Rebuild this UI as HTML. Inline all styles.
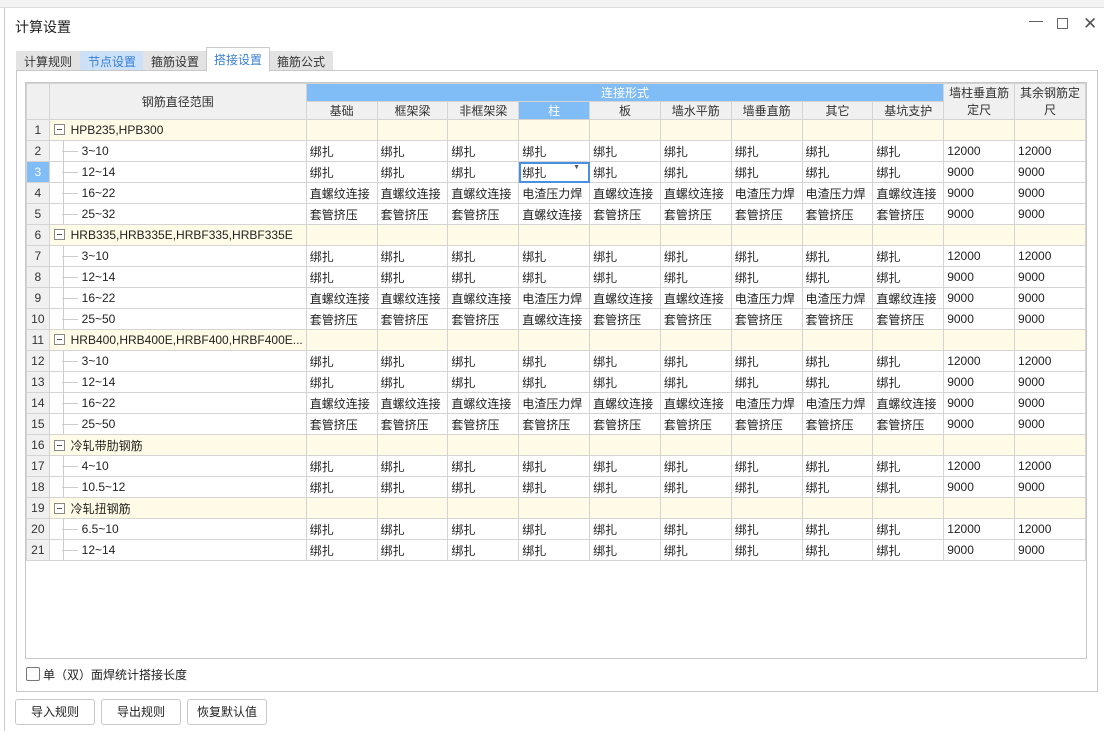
<!DOCTYPE html>
<html><head><meta charset="utf-8"><style>
*{box-sizing:border-box;margin:0;padding:0}
body{width:1104px;height:731px;background:#fff;position:relative;overflow:hidden;font-family:"Liberation Sans","Noto Sans CJK SC",sans-serif;font-size:12px;color:#222}
.topbar{position:absolute;left:0;top:0;width:1104px;height:8px;background:#f3f3f3;border-bottom:1px solid #ddd}
.dlg{position:absolute;left:4px;top:8px;width:1100px;height:723px;background:#fff;border-left:1px solid #ccc}
.title{position:absolute;left:15px;top:17px;font-size:14px;color:#222}
.ctl{position:absolute;top:14px;color:#555;font-size:14px}
.tab{position:absolute;top:51px;height:20px;padding:0 7px;background:#e3e3e3;color:#333;font-size:12px;line-height:20px;border:1px solid #e3e3e3}
.panel{position:absolute;left:16px;top:70px;width:1082px;height:622px;border:1px solid #c8c8c8;background:#fff}
.tbox{position:absolute;left:25px;top:82px;width:1062px;height:577px;border:1px solid #c8c8c8;background:#fff;overflow:hidden}
table{border-collapse:collapse;table-layout:fixed;position:absolute;left:0;top:0}
td{border:1px solid #d4d4d4;height:21px;padding:0 3px;white-space:nowrap;overflow:hidden;font-size:12px}
.h td{height:17px;background:#f0f0f0;text-align:center;color:#333}
td.n{background:#f0f0f0;text-align:center;color:#333;padding:0}
tr.g td{background:#fffbe6}
tr.g td.n{background:#f0f0f0}
td.blue{background:#80bcf5!important;color:#fff}
.mk{display:inline-block;width:11px;height:11px;border:1px solid #888;vertical-align:-1px;margin:0 6px 0 1px;position:relative;background:#fff}
.mk:after{content:"";position:absolute;left:2px;top:4px;width:5px;height:1px;background:#555}
.ch{padding-left:12px;position:relative}
.ch span{display:inline-block;width:16px;border-top:1px solid #ccc;vertical-align:middle;margin-right:4px;margin-left:0}
.ch:before{content:"";position:absolute;left:13px;top:-1px;bottom:-1px;border-left:1px solid #ccc}
.btn{position:absolute;top:699px;height:26px;border:1px solid #c8c8c8;border-radius:3px;background:#fff;text-align:center;line-height:24px;font-size:12px;color:#222}
.sel{outline:2px solid #4a90e2;outline-offset:-2px}
</style></head><body>
<div class="topbar"></div>
<div class="dlg"></div>
<div class="title">计算设置</div>
<div class="ctl" style="left:1029px;top:12px">—</div>
<div class="ctl" style="left:1057px;top:18px;width:11px;height:11px;border:1px solid #666"></div>
<div class="ctl" style="left:1083px;top:14px;font-size:17px">✕</div>
<div class="tab" style="left:16px">计算规则</div>
<div class="tab" style="left:80px;background:#cce0f7;border-color:#cce0f7;color:#3a7fd5">节点设置</div>
<div class="tab" style="left:143px">箍筋设置</div>
<div class="tab" style="left:206px;top:47px;height:25px;background:#fff;border-color:#c8c8c8;border-bottom-color:#fff;color:#3a7fd5;line-height:24px;z-index:2">搭接设置</div>
<div class="tab" style="left:269px">箍筋公式</div>
<div class="panel"></div>
<div class="tbox">
<table>
<colgroup><col style="width:23px"><col style="width:256px"><col style="width:71px"><col style="width:71px"><col style="width:71px"><col style="width:71px"><col style="width:71px"><col style="width:71px"><col style="width:71px"><col style="width:71px"><col style="width:71px"><col style="width:71px"><col style="width:71px"></colgroup>
<tr class="h"><td class="n" rowspan="2"></td><td rowspan="2">钢筋直径范围</td><td colspan="9" class="blue">连接形式</td><td rowspan="2" style="line-height:17px">墙柱垂直筋<br>定尺</td><td rowspan="2" style="line-height:17px">其余钢筋定<br>尺</td></tr>
<tr class="h"><td>基础</td><td>框架梁</td><td>非框架梁</td><td class="blue">柱</td><td>板</td><td>墙水平筋</td><td>墙垂直筋</td><td>其它</td><td>基坑支护</td></tr>
<tr class="g"><td class="n">1</td><td><span class="mk"></span>HPB235,HPB300</td><td></td><td></td><td></td><td></td><td></td><td></td><td></td><td></td><td></td><td></td><td></td></tr>
<tr><td class="n">2</td><td class="ch"><span></span>3~10</td><td>绑扎</td><td>绑扎</td><td>绑扎</td><td>绑扎</td><td>绑扎</td><td>绑扎</td><td>绑扎</td><td>绑扎</td><td>绑扎</td><td>12000</td><td>12000</td></tr>
<tr><td class="n blue">3</td><td class="ch"><span></span>12~14</td><td>绑扎</td><td>绑扎</td><td>绑扎</td><td class="sel">绑扎<span style="float:right;font-size:7px;color:#555;margin-right:6px">▼</span></td><td>绑扎</td><td>绑扎</td><td>绑扎</td><td>绑扎</td><td>绑扎</td><td>9000</td><td>9000</td></tr>
<tr><td class="n">4</td><td class="ch"><span></span>16~22</td><td>直螺纹连接</td><td>直螺纹连接</td><td>直螺纹连接</td><td>电渣压力焊</td><td>直螺纹连接</td><td>直螺纹连接</td><td>电渣压力焊</td><td>电渣压力焊</td><td>直螺纹连接</td><td>9000</td><td>9000</td></tr>
<tr><td class="n">5</td><td class="ch"><span></span>25~32</td><td>套管挤压</td><td>套管挤压</td><td>套管挤压</td><td>直螺纹连接</td><td>套管挤压</td><td>套管挤压</td><td>套管挤压</td><td>套管挤压</td><td>套管挤压</td><td>9000</td><td>9000</td></tr>
<tr class="g"><td class="n">6</td><td><span class="mk"></span>HRB335,HRB335E,HRBF335,HRBF335E</td><td></td><td></td><td></td><td></td><td></td><td></td><td></td><td></td><td></td><td></td><td></td></tr>
<tr><td class="n">7</td><td class="ch"><span></span>3~10</td><td>绑扎</td><td>绑扎</td><td>绑扎</td><td>绑扎</td><td>绑扎</td><td>绑扎</td><td>绑扎</td><td>绑扎</td><td>绑扎</td><td>12000</td><td>12000</td></tr>
<tr><td class="n">8</td><td class="ch"><span></span>12~14</td><td>绑扎</td><td>绑扎</td><td>绑扎</td><td>绑扎</td><td>绑扎</td><td>绑扎</td><td>绑扎</td><td>绑扎</td><td>绑扎</td><td>9000</td><td>9000</td></tr>
<tr><td class="n">9</td><td class="ch"><span></span>16~22</td><td>直螺纹连接</td><td>直螺纹连接</td><td>直螺纹连接</td><td>电渣压力焊</td><td>直螺纹连接</td><td>直螺纹连接</td><td>电渣压力焊</td><td>电渣压力焊</td><td>直螺纹连接</td><td>9000</td><td>9000</td></tr>
<tr><td class="n">10</td><td class="ch"><span></span>25~50</td><td>套管挤压</td><td>套管挤压</td><td>套管挤压</td><td>直螺纹连接</td><td>套管挤压</td><td>套管挤压</td><td>套管挤压</td><td>套管挤压</td><td>套管挤压</td><td>9000</td><td>9000</td></tr>
<tr class="g"><td class="n">11</td><td><span class="mk"></span>HRB400,HRB400E,HRBF400,HRBF400E...</td><td></td><td></td><td></td><td></td><td></td><td></td><td></td><td></td><td></td><td></td><td></td></tr>
<tr><td class="n">12</td><td class="ch"><span></span>3~10</td><td>绑扎</td><td>绑扎</td><td>绑扎</td><td>绑扎</td><td>绑扎</td><td>绑扎</td><td>绑扎</td><td>绑扎</td><td>绑扎</td><td>12000</td><td>12000</td></tr>
<tr><td class="n">13</td><td class="ch"><span></span>12~14</td><td>绑扎</td><td>绑扎</td><td>绑扎</td><td>绑扎</td><td>绑扎</td><td>绑扎</td><td>绑扎</td><td>绑扎</td><td>绑扎</td><td>9000</td><td>9000</td></tr>
<tr><td class="n">14</td><td class="ch"><span></span>16~22</td><td>直螺纹连接</td><td>直螺纹连接</td><td>直螺纹连接</td><td>电渣压力焊</td><td>直螺纹连接</td><td>直螺纹连接</td><td>电渣压力焊</td><td>电渣压力焊</td><td>直螺纹连接</td><td>9000</td><td>9000</td></tr>
<tr><td class="n">15</td><td class="ch"><span></span>25~50</td><td>套管挤压</td><td>套管挤压</td><td>套管挤压</td><td>套管挤压</td><td>套管挤压</td><td>套管挤压</td><td>套管挤压</td><td>套管挤压</td><td>套管挤压</td><td>9000</td><td>9000</td></tr>
<tr class="g"><td class="n">16</td><td><span class="mk"></span>冷轧带肋钢筋</td><td></td><td></td><td></td><td></td><td></td><td></td><td></td><td></td><td></td><td></td><td></td></tr>
<tr><td class="n">17</td><td class="ch"><span></span>4~10</td><td>绑扎</td><td>绑扎</td><td>绑扎</td><td>绑扎</td><td>绑扎</td><td>绑扎</td><td>绑扎</td><td>绑扎</td><td>绑扎</td><td>12000</td><td>12000</td></tr>
<tr><td class="n">18</td><td class="ch"><span></span>10.5~12</td><td>绑扎</td><td>绑扎</td><td>绑扎</td><td>绑扎</td><td>绑扎</td><td>绑扎</td><td>绑扎</td><td>绑扎</td><td>绑扎</td><td>9000</td><td>9000</td></tr>
<tr class="g"><td class="n">19</td><td><span class="mk"></span>冷轧扭钢筋</td><td></td><td></td><td></td><td></td><td></td><td></td><td></td><td></td><td></td><td></td><td></td></tr>
<tr><td class="n">20</td><td class="ch"><span></span>6.5~10</td><td>绑扎</td><td>绑扎</td><td>绑扎</td><td>绑扎</td><td>绑扎</td><td>绑扎</td><td>绑扎</td><td>绑扎</td><td>绑扎</td><td>12000</td><td>12000</td></tr>
<tr><td class="n">21</td><td class="ch"><span></span>12~14</td><td>绑扎</td><td>绑扎</td><td>绑扎</td><td>绑扎</td><td>绑扎</td><td>绑扎</td><td>绑扎</td><td>绑扎</td><td>绑扎</td><td>9000</td><td>9000</td></tr>
</table>
</div>
<div style="position:absolute;left:26px;top:667px;width:14px;height:14px;border:1px solid #777;border-radius:2px;background:#fff"></div>
<div style="position:absolute;left:43px;top:666px;font-size:12px">单（双）面焊统计搭接长度</div>
<div class="btn" style="left:15px;width:80px">导入规则</div>
<div class="btn" style="left:101px;width:80px">导出规则</div>
<div class="btn" style="left:187px;width:80px">恢复默认值</div>
</body></html>
